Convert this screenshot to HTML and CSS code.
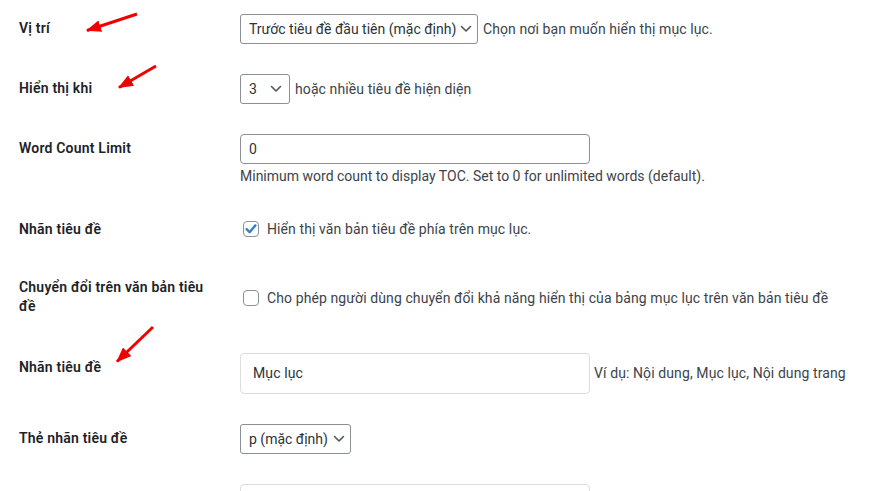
FILE: index.html
```html
<!DOCTYPE html>
<html lang="vi">
<head>
<meta charset="utf-8">
<title>Cài đặt mục lục</title>
<link rel="stylesheet" href="styles.css">
</head>
<body>
<div class="page">
  <div class="form">
    <div class="row r1">
      <div class="th">Vị trí</div>
      <div class="td">
        <div class="line">
          <span class="select wide">Trước tiêu đề đầu tiên (mặc định)<svg class="chev" viewBox="0 0 12 8" width="12" height="8"><polyline points="1.5,1.5 6,6 10.5,1.5"/></svg></span>
          <span class="desc">Chọn nơi bạn muốn hiển thị mục lục.</span>
        </div>
      </div>
    </div>
    <div class="row r2">
      <div class="th">Hiển thị khi</div>
      <div class="td">
        <div class="line">
          <span class="select small">3<svg class="chev" viewBox="0 0 12 8" width="12" height="8"><polyline points="1.5,1.5 6,6 10.5,1.5"/></svg></span>
          <span class="desc">hoặc nhiều tiêu đề hiện diện</span>
        </div>
      </div>
    </div>
    <div class="row r3">
      <div class="th">Word Count Limit</div>
      <div class="td">
        <div class="input">0</div>
        <p class="desc help">Minimum word count to display TOC. Set to 0 for unlimited words (default).</p>
      </div>
    </div>
    <div class="row r4">
      <div class="th">Nhãn tiêu đề</div>
      <div class="td">
        <div class="line">
          <span class="check on"><svg viewBox="0 0 16 16" width="16" height="16"><polyline points="3.6,8.2 6.6,11.2 12.4,4.4"/></svg></span>
          <span class="desc">Hiển thị văn bản tiêu đề phía trên mục lục.</span>
        </div>
      </div>
    </div>
    <div class="row r5">
      <div class="th">Chuyển đổi trên văn bản tiêu đề</div>
      <div class="td">
        <div class="line">
          <span class="check"></span>
          <span class="desc">Cho phép người dùng chuyển đổi khả năng hiển thị của bảng mục lục trên văn bản tiêu đề</span>
        </div>
      </div>
    </div>
    <div class="row r6">
      <div class="th">Nhãn tiêu đề</div>
      <div class="td">
        <div class="line tight">
          <div class="input big">Mục lục</div>
          <span class="desc">Ví dụ: Nội dung, Mục lục, Nội dung trang</span>
        </div>
      </div>
    </div>
    <div class="row r7">
      <div class="th">Thẻ nhãn tiêu đề</div>
      <div class="td">
        <div class="line">
          <span class="select tag">p (mặc định)<svg class="chev" viewBox="0 0 12 8" width="12" height="8"><polyline points="1.5,1.5 6,6 10.5,1.5"/></svg></span>
        </div>
      </div>
    </div>
    <div class="row r8">
      <div class="th"></div>
      <div class="td">
        <div class="input big"></div>
      </div>
    </div>
  </div>
  <svg class="annot" width="896" height="491" viewBox="0 0 896 491">
    <defs>
      <marker id="head" markerUnits="userSpaceOnUse" markerWidth="16" markerHeight="14" refX="14" refY="6" orient="auto">
        <polygon points="0,0 15,6 0,12" fill="#f20000"/>
      </marker>
    </defs>
    <line x1="137" y1="14" x2="87" y2="30.5" marker-end="url(#head)"/>
    <line x1="156" y1="66" x2="119" y2="87.5" marker-end="url(#head)"/>
    <line x1="153" y1="327" x2="117" y2="361.5" marker-end="url(#head)"/>
  </svg>
</div>
</body>
</html>
```

FILE: styles.css
```css
html, body {
  margin: 0;
  padding: 0;
  background: #ffffff;
}

body {
  font-family: Roboto, "Noto Sans", "Liberation Sans", sans-serif;
  font-size: 14px;
  letter-spacing: 0.1px;
  color: #3c434a;
  overflow: hidden;
}

.page {
  position: relative;
  width: 896px;
  height: 491px;
  overflow: hidden;
}

.form {
  padding-left: 19px;
  margin-top: -1px;
}

.row {
  display: grid;
  grid-template-columns: 211px 1fr;
}

.th {
  align-self: start;
  padding: 20px 20px 20px 0;
  font-weight: 600;
  letter-spacing: 0.2px;
  line-height: 1.3;
  color: #1d2327;
}

.td {
  align-self: center;
  padding: 15px 10px;
  line-height: 1.3;
}

.r5 .th {
  padding-bottom: 23px;
}

.line {
  display: flex;
  align-items: center;
  gap: 5px;
}

.line.tight {
  gap: 4px;
}

.select {
  display: inline-flex;
  align-items: center;
  box-sizing: border-box;
  height: 30px;
  padding: 0 5px 0 8px;
  border: 1px solid #8c8f94;
  border-radius: 3px;
  color: #2c3338;
  background: #fff;
  white-space: nowrap;
  letter-spacing: 0;
}

.select.wide {
  width: 238px;
}

.select.small {
  width: 50px;
  padding-right: 7px;
}

.select.tag {
  width: 111px;
}

.chev {
  flex: none;
  margin-left: auto;
  padding-left: 4px;
  fill: none;
  stroke: #50575e;
  stroke-width: 1.6;
  stroke-linecap: round;
  stroke-linejoin: round;
}

.input {
  box-sizing: border-box;
  width: 350px;
  height: 30px;
  padding: 0 8px;
  display: flex;
  align-items: center;
  border: 1px solid #8c8f94;
  border-radius: 4px;
  color: #2c3338;
  background: #fff;
}

.input.big {
  height: 41px;
  padding: 0 12px;
  border-color: #dcdcde;
  flex: none;
}

.help {
  margin: 3px 0 0;
  letter-spacing: 0;
}

.desc {
  white-space: nowrap;
}

.check {
  flex: none;
  box-sizing: border-box;
  width: 16px;
  height: 16px;
  margin-left: 3px;
  margin-right: 3px;
  border: 1px solid #8c8f94;
  border-radius: 4px;
  background: #fff;
  display: inline-flex;
}

.check svg {
  margin: -1px;
  fill: none;
  stroke: #3582c4;
  stroke-width: 2.4;
  stroke-linecap: round;
  stroke-linejoin: round;
}

.annot {
  position: absolute;
  left: 0;
  top: 0;
  pointer-events: none;
}

.annot line {
  stroke: #f20000;
  stroke-width: 3;
}
```
